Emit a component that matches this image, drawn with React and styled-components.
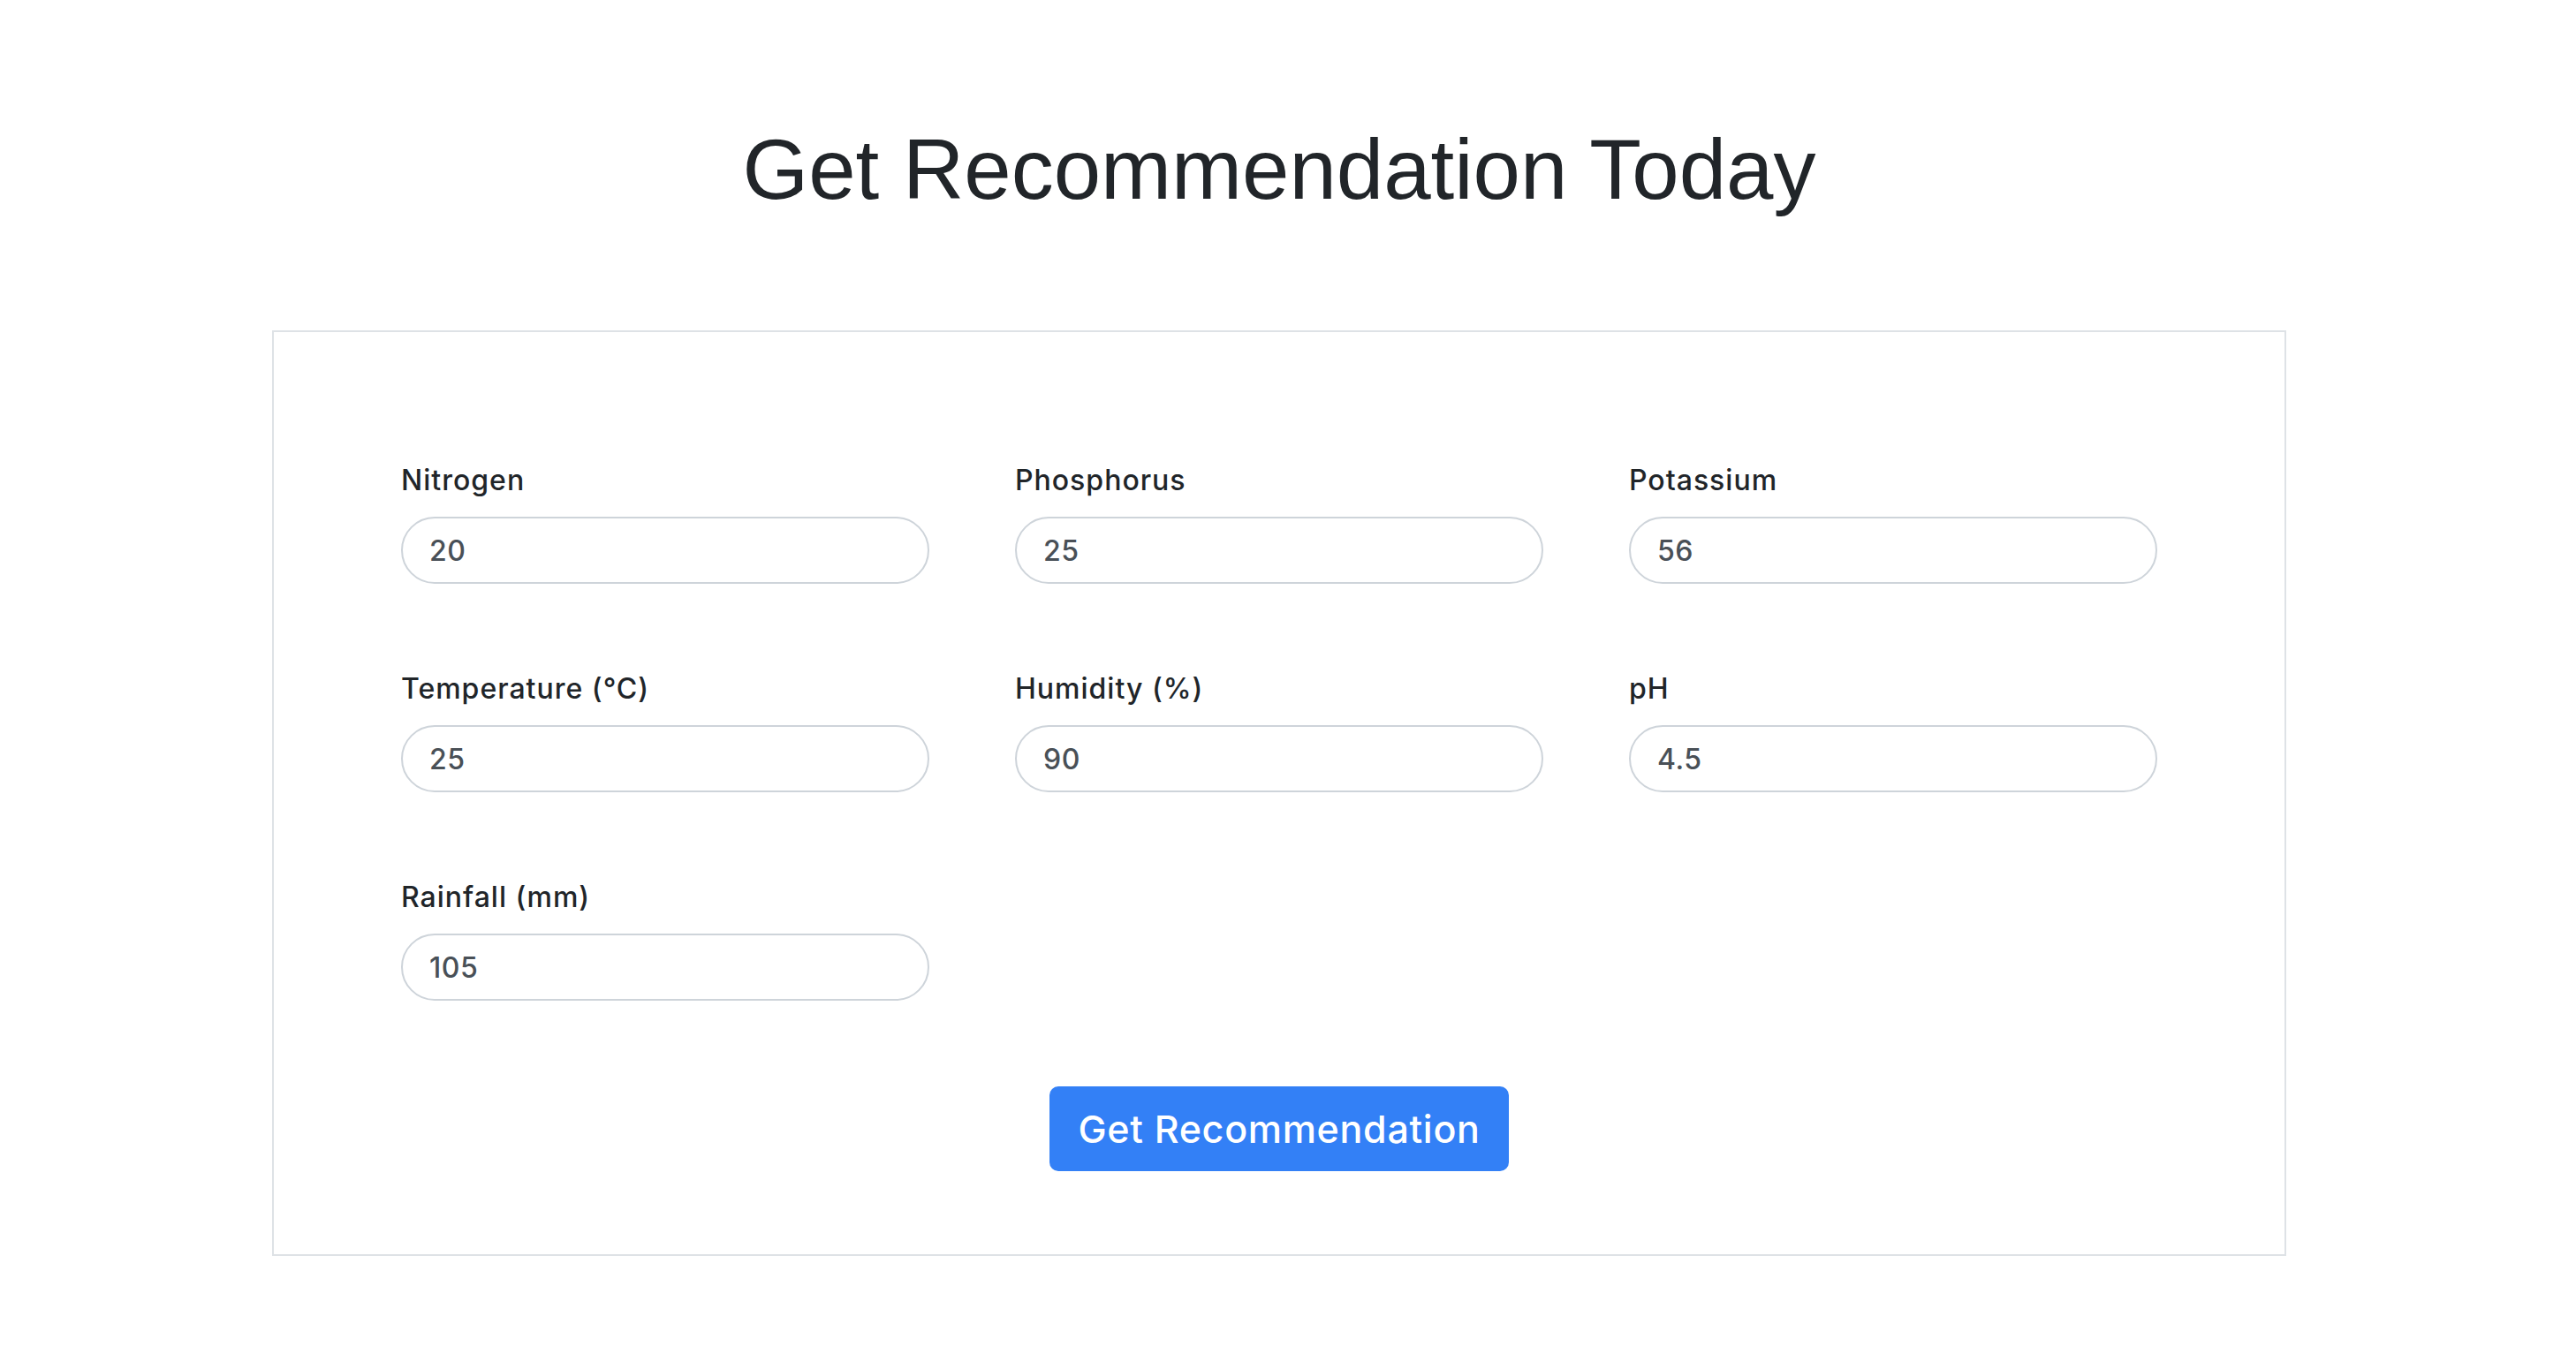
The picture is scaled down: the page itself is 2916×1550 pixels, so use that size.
import React from 'react';
import styled, { createGlobalStyle } from 'styled-components';

const GlobalStyle = createGlobalStyle`
  html, body {
    margin: 0;
    padding: 0;
    background: #fff;
  }

  body {
    font-family: Inter, "Noto Sans", sans-serif;
    color: #212529;
  }

  * {
    box-sizing: border-box;
  }
`;

const fields = [
  { label: 'Nitrogen', value: '20' },
  { label: 'Phosphorus', value: '25' },
  { label: 'Potassium', value: '56' },
  { label: 'Temperature (°C)', value: '25' },
  { label: 'Humidity (%)', value: '90' },
  { label: 'pH', value: '4.5' },
  { label: 'Rainfall (mm)', value: '105' },
];

const App = () => {
  return (
    <Page>
      <GlobalStyle />
      <Title>Get Recommendation Today</Title>
      <Card>
        <FieldGrid>
          {fields.map((f) => (
            <Field key={f.label}>
              <Label>{f.label}</Label>
              <Input type="text" defaultValue={f.value} />
            </Field>
          ))}
        </FieldGrid>
        <Actions>
          <SubmitButton type="button">Get Recommendation</SubmitButton>
        </Actions>
      </Card>
    </Page>
  );
};

export default App;

const Page = styled.div`
  margin-right: 20px;
  padding-bottom: 80px;
`;

const Title = styled.h1`
  margin: 0;
  padding-top: 134px;
  text-align: center;
  font-family: "Liberation Sans", Arial, sans-serif;
  font-size: 96px;
  font-weight: 400;
  line-height: 115px;
  color: #212529;
`;

const Card = styled.div`
  width: 2280px;
  margin: 125px auto 0;
  border: 2px solid #dee2e6;
  padding: 144px 144px 94px;
`;

const FieldGrid = styled.div`
  display: grid;
  grid-template-columns: repeat(3, 1fr);
  column-gap: 97px;
  row-gap: 95px;
`;

const Field = styled.div`
  display: flex;
  flex-direction: column;
`;

const Label = styled.label`
  display: block;
  font-size: 32px;
  line-height: 48px;
  font-weight: 500;
  letter-spacing: 1px;
  color: #212529;
  margin-bottom: 17px;
`;

const Input = styled.input`
  width: 100%;
  height: 76px;
  border: 2px solid #ced4da;
  border-radius: 38px;
  padding: 0 30px;
  font-family: Inter, "Noto Sans", sans-serif;
  font-size: 32px;
  font-weight: 500;
  letter-spacing: 0.5px;
  color: #495057;
  background: #fff;
  outline: none;
`;

const Actions = styled.div`
  display: flex;
  justify-content: center;
  margin-top: 97px;
`;

const SubmitButton = styled.button`
  height: 96px;
  padding: 0 32px;
  border: none;
  border-radius: 10px;
  background: #3380f6;
  color: #fff;
  font-family: Inter, "Noto Sans", sans-serif;
  font-size: 43px;
  font-weight: 500;
  letter-spacing: 0.7px;
  cursor: pointer;
`;
